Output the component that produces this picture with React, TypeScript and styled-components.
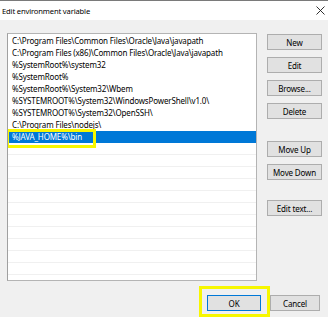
import styled, { createGlobalStyle } from 'styled-components';

const GlobalStyle = createGlobalStyle`
  html, body {
    margin: 0;
    padding: 0;
    background: #ffffff;
  }
  body {
    font-family: "Noto Sans", "Open Sans", sans-serif;
  }
`;

const paths = [
  'C:\\Program Files\\Common Files\\Oracle\\Java\\javapath',
  'C:\\Program Files (x86)\\Common Files\\Oracle\\Java\\javapath',
  '%SystemRoot%\\system32',
  '%SystemRoot%',
  '%SystemRoot%\\System32\\Wbem',
  '%SYSTEMROOT%\\System32\\WindowsPowerShell\\v1.0\\',
  '%SYSTEMROOT%\\System32\\OpenSSH\\',
  'C:\\Program Files\\nodejs\\',
  '%JAVA_HOME%\\bin',
];

const selectedIndex = 8;
const emptyRows = 11;

const CloseIcon = () => (
  <svg width="9" height="9" viewBox="0 0 9 9">
    <path d="M0.5 0.5 L8.5 8.5 M8.5 0.5 L0.5 8.5" stroke="#1a1a1a" strokeWidth="0.9" fill="none" />
  </svg>
);

export default function App() {
  return (
    <>
      <GlobalStyle />
      <Dialog>
        <TitleBar>
          <Title>Edit environment variable</Title>
          <CloseIcon />
        </TitleBar>

        <Body>
          <PathList>
            {paths.map((p, i) => (
              <Row key={p} $selected={i === selectedIndex}>
                {p}
              </Row>
            ))}
            {Array.from({ length: emptyRows }, (_, i) => (
              <EmptyRow key={i} />
            ))}
          </PathList>

          <ButtonColumn>
            <ButtonGroup>
              <Button>New</Button>
              <Button>Edit</Button>
              <Button>Browse...</Button>
              <Button>Delete</Button>
            </ButtonGroup>
            <ButtonGroup $top={22}>
              <Button>Move Up</Button>
              <Button>Move Down</Button>
            </ButtonGroup>
            <ButtonGroup $top={20}>
              <Button>Edit text...</Button>
            </ButtonGroup>
          </ButtonColumn>
        </Body>

        <Footer>
          <Marked>
            <Button $primary $width={54}>OK</Button>
          </Marked>
          <Button $width={50}>Cancel</Button>
        </Footer>
      </Dialog>
    </>
  );
}

const Dialog = styled.div`
  width: 328px;
  height: 317px;
  background: #f0f0f0;
  display: flex;
  flex-direction: column;
  font-size: 8px;
  letter-spacing: -0.15px;
  color: #000;
`;

const TitleBar = styled.div`
  height: 19px;
  border-top: 1px solid #7a7a7a;
  background: #ffffff;
  display: flex;
  align-items: center;
  justify-content: space-between;
  padding: 0 3px 0 2px;
`;

const Title = styled.span`
  font-size: 7.6px;
  line-height: 12px;
`;

const Body = styled.div`
  display: flex;
  gap: 10px;
  padding: 13px 6px 0 7px;
`;

const PathList = styled.div`
  width: 250px;
  height: 248px;
  box-sizing: border-box;
  padding-top: 1px;
  background: #ffffff;
  border: 1px solid #b4b4b4;
  border-left-color: #a0a0a0;
  overflow: hidden;
`;

const Row = styled.div<{ $selected?: boolean }>`
  position: relative;
  height: 12px;
  line-height: 12px;
  padding-left: 4px;
  white-space: nowrap;
  background: ${({ $selected }) => ($selected ? '#0078d7' : 'transparent')};
  color: ${({ $selected }) => ($selected ? '#ffffff' : '#000000')};

  ${({ $selected }) =>
    $selected &&
    `
    &::after {
      content: '';
      position: absolute;
      left: -2px;
      top: -2px;
      width: 90px;
      height: 19px;
      box-sizing: border-box;
      border: 3px solid #f7f700;
    }
  `}
`;

const EmptyRow = styled.div`
  height: 12px;
  box-sizing: border-box;
  border-bottom: 1px solid #f0f0f0;
`;

const ButtonColumn = styled.div`
  display: flex;
  flex-direction: column;
  padding-top: 1px;
`;

const ButtonGroup = styled.div<{ $top?: number }>`
  display: flex;
  flex-direction: column;
  gap: 7px;
  margin-top: ${({ $top }) => $top ?? 0}px;
`;

const Button = styled.div<{ $primary?: boolean; $width?: number }>`
  width: ${({ $width }) => $width ?? 55}px;
  height: 16px;
  box-sizing: border-box;
  background: #e1e1e1;
  border: 1px solid ${({ $primary }) => ($primary ? '#0078d7' : '#adadad')};
  display: flex;
  align-items: center;
  justify-content: center;
  font-size: 8px;
  color: #000;
`;

const Footer = styled.div`
  display: flex;
  justify-content: flex-end;
  gap: 9px;
  padding: 14px 8px 0 0;
`;

const Marked = styled.div`
  position: relative;

  &::after {
    content: '';
    position: absolute;
    left: -8px;
    top: -9px;
    width: 71px;
    height: 31px;
    box-sizing: border-box;
    border: 3px solid #f7f700;
  }
`;
